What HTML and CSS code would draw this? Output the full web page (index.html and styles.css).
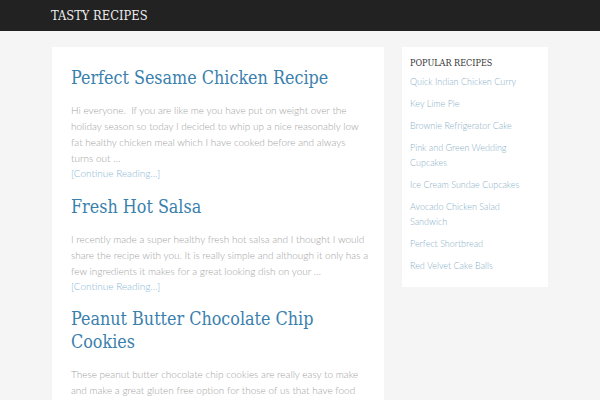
FILE: index.html
```html
<html>
<head>
	<meta charset="UTF-8">
	<link rel="stylesheet" href="styles.css">
</head>
<body>
	<div id="site-header">
		<div class="wrap">
			<div class="site-title">TASTY RECIPES</div>
		</div>
	</div>

	<div class="wrap content-wrap">
		<div id="content">
			<div class="entry">
				<h2 class="entry-title">Perfect Sesame Chicken Recipe</h2>
				<p>Hi everyone.&nbsp; If you are like me you have put on weight over the holiday season so today I decided to whip up a nice reasonably low fat healthy chicken meal which I have cooked before and always turns out &hellip;</p>
				<a class="more-link">[Continue Reading...]</a>
			</div>
			<div class="entry">
				<h2 class="entry-title">Fresh Hot Salsa</h2>
				<p>I recently made a super healthy fresh hot salsa and I thought I would share the recipe with you. It is really simple and although it only has a few ingredients it makes for a great looking dish on your &hellip;</p>
				<a class="more-link">[Continue Reading...]</a>
			</div>
			<div class="entry">
				<h2 class="entry-title">Peanut Butter Chocolate Chip Cookies</h2>
				<p>These peanut butter chocolate chip cookies are really easy to make and make a great gluten free option for those of us that have food intolerances. Not all peanut butter cookies are made equal, so be sure &hellip;</p>
			</div>
		</div>

		<div id="sidebar">
			<h4 class="widget-title">POPULAR RECIPES</h4>
			<ul class="recipe-list">
				<li><a>Quick Indian Chicken Curry</a></li>
				<li><a>Key Lime Pie</a></li>
				<li><a>Brownie Refrigerator Cake</a></li>
				<li><a>Pink and Green Wedding Cupcakes</a></li>
				<li><a>Ice Cream Sundae Cupcakes</a></li>
				<li><a>Avocado Chicken Salad Sandwich</a></li>
				<li><a>Perfect Shortbread</a></li>
				<li><a>Red Velvet Cake Balls</a></li>
			</ul>
		</div>
	</div>
</body>
</html>
```

FILE: styles.css
```css
body {
	background-color: #f5f5f5;
	margin: 0;
	padding: 0;
	font-family: "Lato", "Open Sans", sans-serif;
	font-weight: 300;
}

.wrap {
	width: 496px;
	margin: 0 auto;
}

#site-header {
	background-color: #222;
	height: 31px;
}

.site-title {
	font-family: "DejaVu Serif Condensed", "DejaVu Serif", serif;
	font-size: 12.8px;
	color: #eee;
	line-height: 31px;
	margin-left: -1px;
}

.content-wrap {
	display: flex;
	align-items: flex-start;
	gap: 18px;
	margin-top: 16px;
}

#content {
	background-color: #fff;
	width: 332px;
	flex: none;
	box-sizing: border-box;
	padding: 19px 14px 20px 19px;
}

.entry {
	margin-bottom: 13.5px;
}

.entry-title {
	font-family: "DejaVu Serif Condensed", "DejaVu Serif", serif;
	font-weight: 300;
	font-size: 17.8px;
	line-height: 23px;
	color: #3a80ad;
	margin: 0 0 13px 0;
}

.entry p {
	font-size: 10px;
	line-height: 16px;
	color: #a3a3a3;
	margin: 0;
}

.more-link {
	display: block;
	margin-top: -1px;
	font-size: 10px;
	line-height: 16px;
	color: #8ab8d6;
}

#sidebar {
	background-color: #fff;
	width: 146px;
	flex: none;
	box-sizing: border-box;
	padding: 9px 20px 14px 8px;
}

.widget-title {
	font-family: "DejaVu Serif Condensed", "DejaVu Serif", serif;
	font-weight: normal;
	font-size: 9px;
	line-height: 14px;
	color: #333;
	margin: 0 0 4px 0;
}

.recipe-list {
	list-style: none;
	margin: 0;
	padding: 0;
}

.recipe-list li {
	font-size: 9px;
	line-height: 15px;
	color: #8ab0c8;
	margin-bottom: 7px;
}

.recipe-list li:last-child {
	margin-bottom: 0;
}
```
